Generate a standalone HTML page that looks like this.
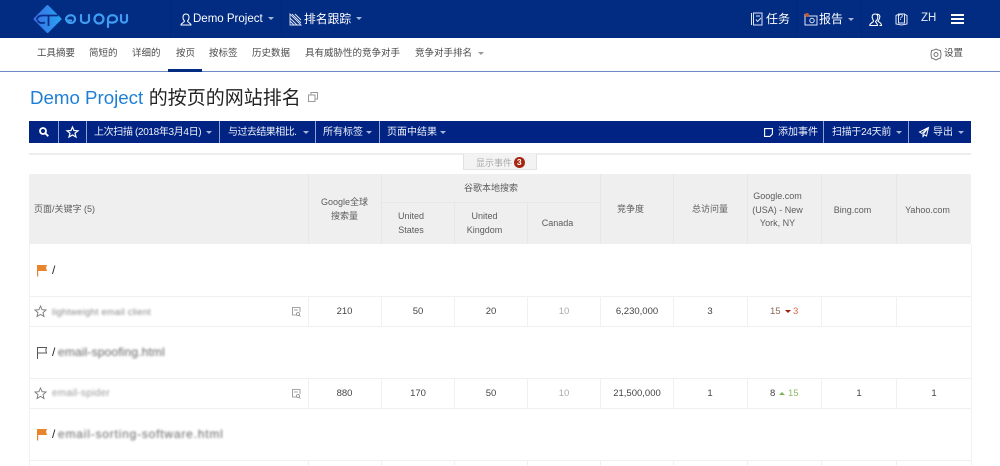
<!DOCTYPE html>
<html lang="zh"><head><meta charset="utf-8"><title>Demo Project</title>
<style>
*{box-sizing:border-box}
html,body{margin:0;padding:0;background:#fff}
body{width:1000px;height:466px;overflow:hidden;position:relative;font-family:"Liberation Sans","Noto Sans CJK SC",sans-serif;color:#444}
.a{position:absolute;white-space:nowrap}
.c{position:absolute;white-space:nowrap;text-align:center;transform:translateX(-50%)}
.box{position:absolute}
svg{position:absolute;overflow:visible}
.n{font-size:12px;color:#fff;line-height:16px}
.s{font-size:9.500px;color:#4a4a4a;line-height:14px;top:46.500px}
.t{font-size:10px;color:#eef1f8;line-height:14px;top:126px}
.h{font-size:9px;color:#5c5c5c;line-height:13.500px}
.d{font-size:9.500px;color:#444;line-height:14px}
.car{position:absolute;width:0;height:0;border-left:3px solid transparent;border-right:3px solid transparent;border-top:3px solid #a8b6d8}
.blur{filter:blur(1px);color:#666}
.v{position:absolute;width:1px;background:#f1f1f1}
.hv{position:absolute;width:1px;background:#e7e7e7}
.r{position:absolute;left:29px;width:942px;height:1px;background:#f0f0f0}
</style></head><body>

<!-- top bar -->
<div class="box" style="left:0;top:0;width:1000px;height:38px;background:#022b82"></div>
<div class="box" style="left:170px;top:0;width:1px;height:38px;background:#02277a"></div>
<div class="box" style="left:281px;top:0;width:1px;height:38px;background:#02277a"></div>
<div class="box" style="left:796px;top:0;width:1px;height:38px;background:#02277a"></div>
<div class="box" style="left:861px;top:0;width:1px;height:38px;background:#02277a"></div>

<!-- logo -->
<svg style="left:33px;top:5px" width="29" height="28" viewBox="0 0 29 28">
<defs><linearGradient id="g" x1="0" y1="0" x2="1" y2="0"><stop offset="0" stop-color="#3b6fe6"/><stop offset="1" stop-color="#27a2f0"/></linearGradient></defs>
<path d="M14.500 1 L27.500 14 L14.500 27 L1.500 14 Z" fill="url(#g)" stroke="url(#g)" stroke-width="2" stroke-linejoin="round"/>
<path d="M4 15 C4 11.500 7 10.500 10 10.500 L25 10.500 M15.500 11 L15.500 21 M4.500 15.500 C6 18 9 18.500 12 17.500" fill="none" stroke="#0a2f8a" stroke-width="1.800"/>
</svg>
<svg style="left:65px;top:12px" width="63" height="16" viewBox="0 0 63 16" fill="none" stroke="#3f9cf2" stroke-width="2.200" stroke-linecap="round">
<path d="M1 7 C2 2 10 2 10 7 C10 12 3 12 1.500 8.500 L6 8.500"/>
<path d="M16 3 L16 8 C16 12 24 12 24 8 L24 3"/>
<circle cx="34" cy="7" r="4.500"/>
<path d="M43 15 L43 7 C43 2 52 2 52 7 C52 11 46 11 44 10"/>
<path d="M56 3 L56 8 C56 11.500 62 11.500 62 8 L62 3"/>
</svg>

<svg style="left:180px;top:13px" width="12" height="13" viewBox="0 0 12 13" fill="none" stroke="#fff" stroke-width="1"><path d="M6 1 C3.500 1 3 3 3 4.500 C3 6.500 4.500 8 4.500 8 C4.500 9.500 1 10 1 12 L11 12 C11 10 7.500 9.500 7.500 8 C7.500 8 9 6.500 9 4.500 C9 3 8.500 1 6 1Z"/></svg>
<div class="a n" style="left:193px;top:11px;font-size:11.500px">Demo Project</div>
<div class="car" style="left:268px;top:17px"></div>
<svg style="left:289px;top:13px" width="13" height="13" viewBox="0 0 13 13" fill="none" stroke="#dfe6f5" stroke-width=".9"><path d="M1 1 L1 12 L12 12 Z M1 5 L8 12 M1 8 L5 12 M3 1 L12 10 M6 1 L12 7"/></svg>
<div class="a n" style="left:304px;top:11px;font-size:11.800px">排名跟踪</div>
<div class="car" style="left:356px;top:17px"></div>

<svg style="left:751px;top:12px" width="13" height="14" viewBox="0 0 13 14" fill="none" stroke="#dfe6f5" stroke-width="1"><path d="M2.500 1 L11 1 L11 13 L2.500 13 Z M.5 1 L.5 13 M5 4 L9 4 M5 7.500 L6.500 9.500 L10 6"/></svg>
<div class="a n" style="left:766px;top:11px;font-size:12px">任务</div>
<svg style="left:804px;top:12px" width="14" height="14" viewBox="0 0 14 14" fill="none" stroke="#dfe6f5" stroke-width="1"><path d="M1 2 L1 13 L13 13 L13 4 L4 4"/><circle cx="8" cy="8.500" r="2.200"/><circle cx="3" cy="3" r="2" fill="#c9572e" stroke="none"/></svg>
<div class="a n" style="left:819px;top:11px;font-size:12px">报告</div>
<div class="car" style="left:848px;top:18px"></div>
<svg style="left:869px;top:13px" width="13" height="13" viewBox="0 0 13 13" fill="none" stroke="#fff" stroke-width="1.100"><path d="M6 1 C3.500 1 3 3 3.200 4.500 C3.400 6 4.500 7 4.500 8 C4.500 9.500 .8 10 .8 12.500 L8.500 12.500 C8.500 10.500 7 10 6.500 8.500 C8 7 9 6 8.800 3.500 C8.600 2 7.500 1 6 1Z M8 1.200 C10 1 11 2.500 10.800 4 C10.600 6 9.500 7 9 8.300 C10.500 9.300 12.500 10 12.500 12.500 L10.500 12.500"/></svg>
<svg style="left:895px;top:13px" width="13" height="13" viewBox="0 0 13 13" fill="none" stroke="#dfe6f5" stroke-width="1"><path d="M3 1.500 L1 2.500 L1 11 L6.500 12 L12 11 L12 2.500 L10 1.500 M3.500 1 L9.500 1 L9.500 10 L3.500 10Z"/></svg>
<div class="a" style="left:898.500px;top:13px;font-size:8px;color:#fff;line-height:10px">?</div>
<div class="a n" style="left:921px;top:10px;font-size:11.500px;color:#e8ecf6">ZH</div>
<div class="box" style="left:951px;top:14px;width:13px;height:2px;background:#fff"></div>
<div class="box" style="left:951px;top:18px;width:13px;height:2px;background:#fff"></div>
<div class="box" style="left:951px;top:22px;width:13px;height:1.500px;background:#fff"></div>

<!-- sub nav -->
<div class="box" style="left:0;top:71px;width:1000px;height:1px;background:#6d88c4"></div>
<div class="box" style="left:168px;top:69px;width:34px;height:2.500px;background:#022b82"></div>
<div class="a s" style="left:37px">工具摘要</div>
<div class="a s" style="left:89px">简短的</div>
<div class="a s" style="left:132px">详细的</div>
<div class="a s" style="left:176px">按页</div>
<div class="a s" style="left:209px">按标签</div>
<div class="a s" style="left:252px">历史数据</div>
<div class="a s" style="left:305px">具有威胁性的竞争对手</div>
<div class="a s" style="left:415px">竞争对手排名</div>
<div class="car" style="left:478px;top:52px;border-top-color:#999"></div>
<svg style="left:930px;top:47.500px" width="12" height="13" viewBox="0 0 12 13" fill="none" stroke="#777" stroke-width="1"><path d="M6 1 L8 2 L10.500 2.500 L11 6.500 L10.500 10 L8 11 L6 12 L4 11 L1.500 10 L1 6.500 L1.500 2.500 L4 2 Z"/><circle cx="6" cy="6.500" r="2"/></svg>
<div class="a s" style="left:944px">设置</div>

<!-- title -->
<div class="a" style="left:30px;top:85px;font-size:18.700px;line-height:26px;color:#222"><span style="color:#1d7fd6">Demo Project</span><span style="margin-left:5.500px;font-size:19px">的按页的网站排名</span></div>
<svg style="left:308px;top:92px" width="10" height="10" viewBox="0 0 10 10" fill="none" stroke="#999" stroke-width="1"><rect x="3" y=".5" width="6.500" height="6.500"/><rect x=".5" y="3" width="6.500" height="6.500" fill="#fff"/></svg>

<!-- toolbar -->
<div class="box" style="left:29px;top:121px;width:942px;height:22px;background:#012484"></div>
<div class="box" style="left:58px;top:121px;width:1px;height:22px;background:#8fa2cf"></div>
<div class="box" style="left:86px;top:121px;width:1px;height:22px;background:#8fa2cf"></div>
<div class="box" style="left:219px;top:121px;width:1px;height:22px;background:#8fa2cf"></div>
<div class="box" style="left:315px;top:121px;width:1px;height:22px;background:#8fa2cf"></div>
<div class="box" style="left:379px;top:121px;width:1px;height:22px;background:#8fa2cf"></div>
<div class="box" style="left:823px;top:121px;width:1px;height:22px;background:#8fa2cf"></div>
<div class="box" style="left:908px;top:121px;width:1px;height:22px;background:#8fa2cf"></div>
<svg style="left:39px;top:127px" width="10" height="10" viewBox="0 0 10 10" fill="none" stroke="#fff" stroke-width="1.800"><circle cx="4" cy="4" r="3"/><path d="M6.300 6.300 L9.300 9.300"/></svg>
<svg style="left:66px;top:126px" width="13" height="12" viewBox="0 0 13 12" fill="none" stroke="#fff" stroke-width="1.200"><path d="M6.500 1 L8 4.500 L12 4.800 L9 7.200 L10 11 L6.500 9 L3 11 L4 7.200 L1 4.800 L5 4.500 Z"/></svg>
<div class="a t" style="left:94px;letter-spacing:-.35px">上次扫描 (2018年3月4日)</div>
<div class="car" style="left:206px;top:131px"></div>
<div class="a t" style="left:228px;letter-spacing:-.55px">与过去结果相比.</div>
<div class="car" style="left:303px;top:131px"></div>
<div class="a t" style="left:323px">所有标签</div>
<div class="car" style="left:366px;top:131px"></div>
<div class="a t" style="left:387px">页面中结果</div>
<div class="car" style="left:440px;top:131px"></div>
<svg style="left:764px;top:128px" width="9" height="9" viewBox="0 0 9 9" fill="none" stroke="#fff" stroke-width="1.100"><path d="M.6.6 L8.400.6 L8.400 6 L6 8.400 L.6 8.400 Z"/></svg>
<div class="a t" style="left:778px">添加事件</div>
<div class="a t" style="left:832px;letter-spacing:-.3px">扫描于24天前</div>
<div class="car" style="left:896px;top:131px"></div>
<svg style="left:919px;top:127px" width="10" height="10" viewBox="0 0 10 10" fill="none" stroke="#fff" stroke-width="1"><path d="M9.500.5 L.5 5 L3 6.500 L9.500.5 L4 7.500 L4 9.500 L5.500 7.800 L7.500 9 Z"/></svg>
<div class="a t" style="left:933px">导出</div>
<div class="car" style="left:958px;top:131px"></div>

<!-- events -->
<div class="box" style="left:29px;top:153px;width:942px;height:2px;background:#eeeeee"></div>
<div class="box" style="left:463px;top:154px;width:74px;height:16px;background:#f3f3f3;border:1px solid #e2e2e2;border-top:0"></div>
<div class="a" style="left:476px;top:155.500px;font-size:9px;line-height:14px;color:#aaa">显示事件</div>
<div class="box" style="left:514px;top:157px;width:10.500px;height:10.500px;border-radius:50%;background:#a8260f"></div>
<div class="c" style="left:519.200px;top:157px;font-size:8.500px;font-weight:bold;line-height:10.500px;color:#fff">3</div>

<!-- table header -->
<div class="box" style="left:29px;top:174px;width:942px;height:70px;background:#efefef"></div>
<div class="hv" style="left:308px;top:174px;height:70px"></div>
<div class="hv" style="left:381px;top:174px;height:70px"></div>
<div class="hv" style="left:454px;top:202px;height:42px"></div>
<div class="hv" style="left:527px;top:202px;height:42px"></div>
<div class="hv" style="left:600px;top:174px;height:70px"></div>
<div class="hv" style="left:673px;top:174px;height:70px"></div>
<div class="hv" style="left:747px;top:174px;height:70px"></div>
<div class="hv" style="left:821px;top:174px;height:70px"></div>
<div class="hv" style="left:896px;top:174px;height:70px"></div>
<div class="box" style="left:381px;top:202px;width:219px;height:1px;background:#e7e7e7"></div>

<div class="a h" style="left:34px;top:203px">页面/关键字 (5)</div>
<div class="c h" style="left:344.500px;top:196px">Google全球<br>搜索量</div>
<div class="c h" style="left:491px;top:181.500px">谷歌本地搜索</div>
<div class="c h" style="left:411px;top:210px">United<br>States</div>
<div class="c h" style="left:484.500px;top:210px">United<br>Kingdom</div>
<div class="c h" style="left:557.500px;top:217px">Canada</div>
<div class="c h" style="left:630.500px;top:203px">竞争度</div>
<div class="c h" style="left:710px;top:203px">总访问量</div>
<div class="c h" style="left:777.500px;top:190px">Google.com<br>(USA) - New<br>York, NY</div>
<div class="c h" style="left:852.500px;top:203.500px">Bing.com</div>
<div class="c h" style="left:927.500px;top:203.500px">Yahoo.com</div>

<!-- table borders -->
<div class="box" style="left:29px;top:244px;width:1px;height:222px;background:#f3f3f3"></div>
<div class="box" style="left:971px;top:244px;width:1px;height:222px;background:#f3f3f3"></div>
<div class="r" style="top:296px"></div>
<div class="r" style="top:325.500px"></div>
<div class="r" style="top:378px"></div>
<div class="r" style="top:407.500px"></div>
<div class="r" style="top:460px"></div>

<div class="v" style="left:308px;top:296px;height:30px"></div>
<div class="v" style="left:381px;top:296px;height:30px"></div>
<div class="v" style="left:454px;top:296px;height:30px"></div>
<div class="v" style="left:527px;top:296px;height:30px"></div>
<div class="v" style="left:600px;top:296px;height:30px"></div>
<div class="v" style="left:673px;top:296px;height:30px"></div>
<div class="v" style="left:747px;top:296px;height:30px"></div>
<div class="v" style="left:821px;top:296px;height:30px"></div>
<div class="v" style="left:896px;top:296px;height:30px"></div>

<div class="v" style="left:308px;top:378px;height:30px"></div>
<div class="v" style="left:381px;top:378px;height:30px"></div>
<div class="v" style="left:454px;top:378px;height:30px"></div>
<div class="v" style="left:527px;top:378px;height:30px"></div>
<div class="v" style="left:600px;top:378px;height:30px"></div>
<div class="v" style="left:673px;top:378px;height:30px"></div>
<div class="v" style="left:747px;top:378px;height:30px"></div>
<div class="v" style="left:821px;top:378px;height:30px"></div>
<div class="v" style="left:896px;top:378px;height:30px"></div>

<div class="v" style="left:308px;top:460px;height:6px"></div>
<div class="v" style="left:381px;top:460px;height:6px"></div>
<div class="v" style="left:454px;top:460px;height:6px"></div>
<div class="v" style="left:527px;top:460px;height:6px"></div>
<div class="v" style="left:600px;top:460px;height:6px"></div>
<div class="v" style="left:673px;top:460px;height:6px"></div>
<div class="v" style="left:747px;top:460px;height:6px"></div>
<div class="v" style="left:821px;top:460px;height:6px"></div>
<div class="v" style="left:896px;top:460px;height:6px"></div>

<!-- group 1 -->
<svg style="left:37px;top:265px" width="11" height="12" viewBox="0 0 11 12"><path d="M0 0 L10 0 L9 2.500 L10 6 L1.200 6 L1.200 11.500 L0 11.500 Z" fill="#e8842c"/></svg>
<div class="a" style="left:52px;top:262px;font-size:12px;line-height:16px;color:#223">/</div>

<!-- row 1 -->
<svg style="left:34px;top:305px" width="13" height="13" viewBox="0 0 13 13" fill="none" stroke="#777" stroke-width=".9"><path d="M6.500 1 L8.100 4.700 L12 5 L9 7.600 L10 11.500 L6.500 9.400 L3 11.500 L4 7.600 L1 5 L4.900 4.700 Z"/></svg>
<div class="a blur" style="left:52px;top:304.500px;font-size:9.300px;line-height:14px;letter-spacing:.25px;color:#888">lightweight email client</div>
<svg style="left:292px;top:307px" width="9" height="10" viewBox="0 0 9 10" fill="none" stroke="#888" stroke-width=".8"><path d="M5 8 L.5 8 L.5 .5 L8 .5 L8 5 M2 3 L6 3"/><circle cx="6" cy="7" r="1.500"/><path d="M7 8.200 L8.500 9.500"/></svg>
<div class="c d" style="left:344.500px;top:305px">210</div>
<div class="c d" style="left:418px;top:305px">50</div>
<div class="c d" style="left:491px;top:305px">20</div>
<div class="c d" style="left:564px;top:305px;color:#aaa">10</div>
<div class="c d" style="left:637px;top:305px">6,230,000</div>
<div class="c d" style="left:710px;top:305px">3</div>
<div class="a d" style="left:770px;top:305px;color:#8a6a55">15</div>
<div class="box" style="left:785px;top:310px;width:0;height:0;border-left:3px solid transparent;border-right:3px solid transparent;border-top:3.500px solid #a3200f"></div>
<div class="a d" style="left:793px;top:305px;color:#d9694a">3</div>

<!-- group 2 -->
<svg style="left:37px;top:347px" width="11" height="12" viewBox="0 0 11 12" fill="none" stroke="#555" stroke-width="1"><path d="M.5 12 L.5 .5 L9.500 .5 L8.800 3 L9.500 6 L.5 6"/></svg>
<div class="a" style="left:52px;top:344px;font-size:12px;line-height:16px;color:#223">/</div>
<div class="a blur" style="left:58px;top:344px;font-size:12px;line-height:16px;letter-spacing:.15px">email-spoofing.html</div>

<!-- row 2 -->
<svg style="left:34px;top:387px" width="13" height="13" viewBox="0 0 13 13" fill="none" stroke="#777" stroke-width=".9"><path d="M6.500 1 L8.100 4.700 L12 5 L9 7.600 L10 11.500 L6.500 9.400 L3 11.500 L4 7.600 L1 5 L4.900 4.700 Z"/></svg>
<div class="a blur" style="left:52px;top:386.500px;font-size:10px;line-height:14px;letter-spacing:.3px;color:#999">email-spider</div>
<svg style="left:292px;top:389px" width="9" height="10" viewBox="0 0 9 10" fill="none" stroke="#888" stroke-width=".8"><path d="M5 8 L.5 8 L.5 .5 L8 .5 L8 5 M2 3 L6 3"/><circle cx="6" cy="7" r="1.500"/><path d="M7 8.200 L8.500 9.500"/></svg>
<div class="c d" style="left:344.500px;top:387px">880</div>
<div class="c d" style="left:418px;top:387px">170</div>
<div class="c d" style="left:491px;top:387px">50</div>
<div class="c d" style="left:564px;top:387px;color:#aaa">10</div>
<div class="c d" style="left:637px;top:387px">21,500,000</div>
<div class="c d" style="left:710px;top:387px">1</div>
<div class="a d" style="left:770px;top:387px">8</div>
<div class="box" style="left:779px;top:391.500px;width:0;height:0;border-left:3px solid transparent;border-right:3px solid transparent;border-bottom:3.500px solid #7fb35a"></div>
<div class="a d" style="left:788px;top:387px;color:#8dbb68">15</div>
<div class="c d" style="left:859px;top:387px">1</div>
<div class="c d" style="left:934px;top:387px">1</div>

<!-- group 3 -->
<svg style="left:37px;top:429px" width="11" height="12" viewBox="0 0 11 12"><path d="M0 0 L10 0 L9 2.500 L10 6 L1.200 6 L1.200 11.500 L0 11.500 Z" fill="#e8842c"/></svg>
<div class="a" style="left:52px;top:426px;font-size:12px;line-height:16px;color:#223">/</div>
<div class="a blur" style="left:58px;top:426px;font-size:12px;line-height:16px;letter-spacing:.8px">email-sorting-software.html</div>

</body></html>
